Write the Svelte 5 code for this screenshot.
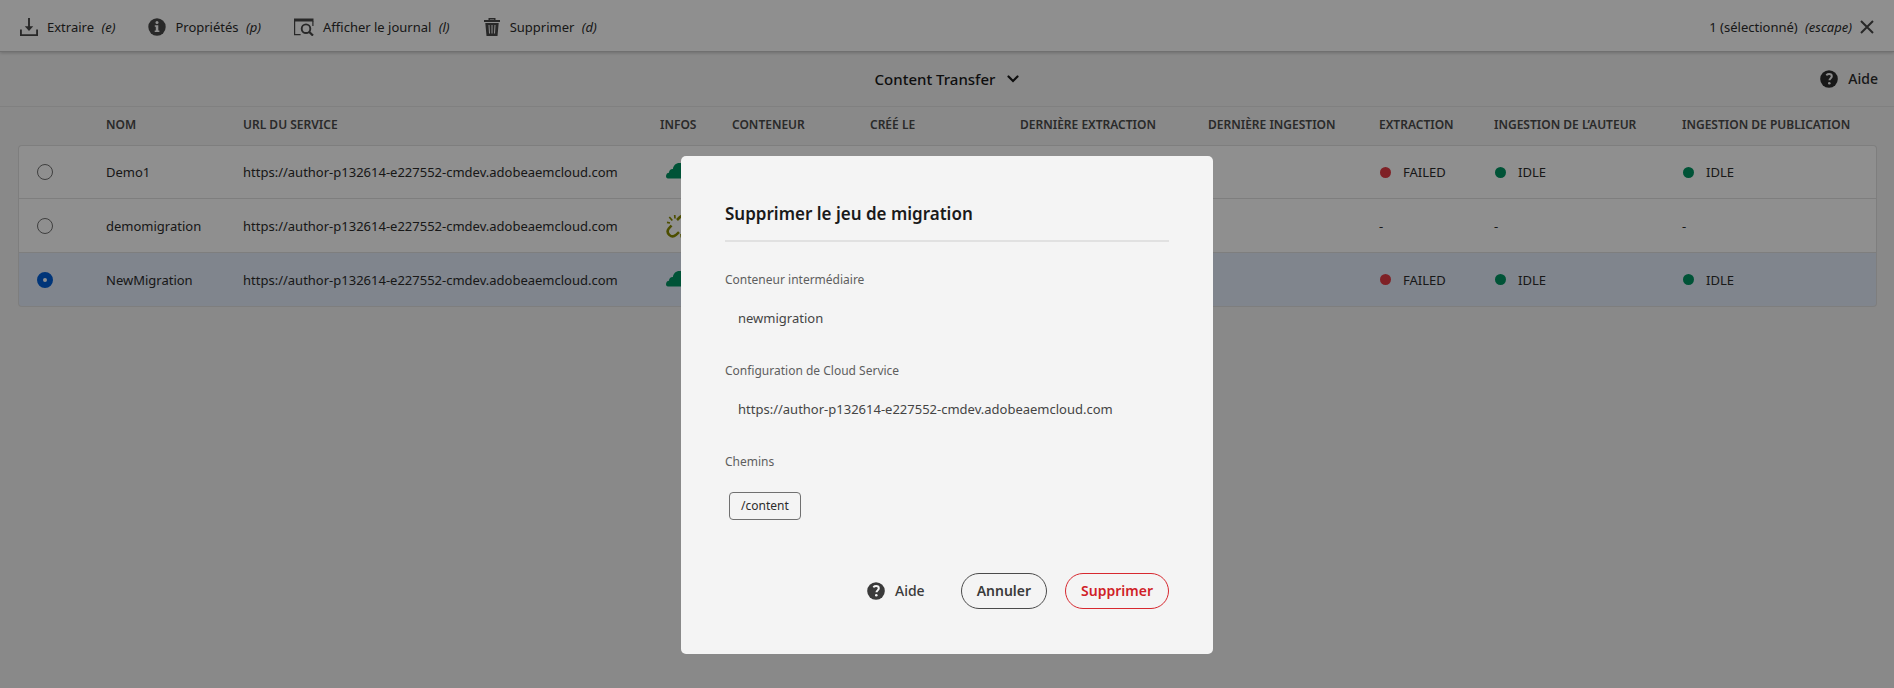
<script>
  const columns = [
    { title: '', width: 88 },
    { title: 'NOM', width: 137 },
    { title: 'URL DU SERVICE', width: 417 },
    { title: 'INFOS', width: 72 },
    { title: 'CONTENEUR', width: 138 },
    { title: 'CRÉÉ LE', width: 150 },
    { title: 'DERNIÈRE EXTRACTION', width: 188 },
    { title: 'DERNIÈRE INGESTION', width: 171 },
    { title: 'EXTRACTION', width: 115 },
    { title: 'INGESTION DE L’AUTEUR', width: 188 },
    { title: 'INGESTION DE PUBLICATION', width: 195 }
  ];

  const url = 'https://author-p132614-e227552-cmdev.adobeaemcloud.com';
  const rows = [
    { name: 'Demo1', icon: 'cloud', states: ['FAILED', 'IDLE', 'IDLE'] },
    { name: 'demomigration', icon: 'unlink', states: ['-', '-', '-'] },
    { name: 'NewMigration', icon: 'cloud', states: ['FAILED', 'IDLE', 'IDLE'] }
  ];
  let selected = $state('NewMigration');
</script>

{#snippet help()}
  <svg class="icon" viewBox="0 0 18 18" aria-hidden="true">
    <circle cx="9" cy="9" r="8.8" fill="currentColor" />
    <path class="cut" d="M6.3 5.2C7.2 4.4 8 4.100 9.100 4.100c1.700 0 2.700.9 2.700 2.200 0 1.900-2.300 2.200-2.300 4" />
    <circle class="hole" cx="9.300" cy="13.200" r="1.300" />
  </svg>
{/snippet}

<div class="page">
  <header class="actions">
    <div class="group">
      <button>
        <svg class="icon" viewBox="0 0 18 18" aria-hidden="true">
          <path d="M.9 11.500v5.600h16.200v-5.600M9 0v9" fill="none" stroke="currentColor" stroke-width="1.900" />
          <path d="M4.800 8.200h8.400L9 13z" fill="currentColor" />
        </svg>
        <span>Extraire <i>(e)</i></span>
      </button>
      <button>
        <svg class="icon" viewBox="0 0 18 18" aria-hidden="true">
          <circle cx="9" cy="9" r="8.700" fill="currentColor" />
          <circle class="hole" cx="9" cy="4.400" r="1.500" />
          <path class="hole" d="M6.800 7.200h3.500v5.300h1.100v1.600H6.700v-1.600h1.100V8.800h-1z" />
        </svg>
        <span>Propriétés <i>(p)</i></span>
      </button>
      <button>
        <svg class="icon wide" viewBox="0 0 20 18" aria-hidden="true">
          <path d="M0 .5h19.500v3H0z" fill="currentColor" />
          <path d="M.6 3v13.700h6M18.900 3v5" fill="none" stroke="currentColor" stroke-width="1.200" />
          <circle cx="12" cy="10.700" r="4.300" fill="none" stroke="currentColor" stroke-width="1.900" />
          <path d="M15 13.800l4 3.800" stroke="currentColor" stroke-width="2.200" />
        </svg>
        <span>Afficher le journal <i>(l)</i></span>
      </button>
      <button>
        <svg class="icon" viewBox="0 0 18 18" aria-hidden="true">
          <path d="M6.200 2V.7h5.600V2" fill="none" stroke="currentColor" stroke-width="1.400" />
          <path d="M1 2h16v2H1zM2.300 5h13.400l-1.200 13H3.500z" fill="currentColor" />
          <path class="slot" d="M6 7l.5 8.500M9 7v8.500M12 7l-.5 8.500" />
        </svg>
        <span>Supprimer <i>(d)</i></span>
      </button>
    </div>
    <button class="deselect">
      <span>1 (sélectionné) <i>(escape)</i></span>
      <svg class="cross" viewBox="0 0 14 14" aria-hidden="true">
        <path d="M1 1l12 12M13 1L1 13" stroke="currentColor" stroke-width="2" />
      </svg>
    </button>
  </header>

  <nav class="titlebar">
    <button class="title">
      Content Transfer
      <svg class="chevron" viewBox="0 0 12 8" aria-hidden="true">
        <path d="M1.500 1.500L6 6l4.500-4.500" fill="none" stroke="currentColor" stroke-width="2.200" stroke-linecap="round" />
      </svg>
    </button>
    <button class="help">{@render help()}Aide</button>
  </nav>

  <main>
    <table>
      <colgroup>
        {#each columns as column}
          <col style:width="{column.width}px" />
        {/each}
      </colgroup>
      <thead>
        <tr>
          {#each columns as column}
            <th scope="col">{column.title}</th>
          {/each}
        </tr>
      </thead>
      <tbody>
        {#each rows as row}
          <tr class:selected={selected === row.name}>
            <td class="pick">
              <input type="radio" id={row.name} name="migration" value={row.name} bind:group={selected} />
            </td>
            <td><label for={row.name}>{row.name}</label></td>
            <td>{url}</td>
            <td class="infos">
              {#if row.icon === 'cloud'}
                <svg viewBox="0 0 24 24" aria-hidden="true">
                  <path d="M2 18.500C.6 18.500 0 17.500 0 16.300c0-2 1.200-3.300 3-3.500 0-2.500 1.600-4 3.900-3.900C7.500 5.300 10 3 13.300 3c3.600 0 6.200 2.600 6.300 6.200 2.600.2 4.400 2.100 4.400 4.700 0 2.700-1.900 4.600-4.500 4.600z" fill="#009562" />
                </svg>
              {:else}
                <svg viewBox="0 0 24 24" aria-hidden="true">
                  <g fill="none" stroke="#8a8c00" stroke-width="2.600">
                    <path d="M5.500 11.500l-2.700 3c-3.400 4.200 2.400 10.400 7 6.600l3.200-3M11 6l3-3c4.400-3.700 10.200 2 6.700 6.700l-3 3" />
                    <path d="M1 8.300l3 .7M3.300 3l3 3.500M8.700 1L9 4.500M23 16.500l-3-.7M20.700 21.500l-3-3.500M15.300 23.500L15 20" stroke-width="1.700" />
                  </g>
                </svg>
              {/if}
            </td>
            <td></td>
            <td></td>
            <td></td>
            <td></td>
            {#each row.states as state}
              <td>
                {#if state === '-'}-{:else}<span class="state" class:failed={state === 'FAILED'}>{state}</span>{/if}
              </td>
            {/each}
          </tr>
        {/each}
      </tbody>
    </table>
  </main>
</div>

<div class="backdrop">
  <div class="dialog" role="dialog" aria-modal="true" aria-labelledby="dialog-title">
    <h2 id="dialog-title">Supprimer le jeu de migration</h2>
    <div class="field">
      <label for="container">Conteneur intermédiaire</label>
      <input id="container" type="text" readonly value="newmigration" />
    </div>
    <div class="field">
      <label for="service">Configuration de Cloud Service</label>
      <input id="service" type="text" readonly value={url} />
    </div>
    <div class="field">
      <span class="caption">Chemins</span>
      <span class="tag">/content</span>
    </div>
    <footer>
      <button class="help">{@render help()}Aide</button>
      <button class="pill">Annuler</button>
      <button class="pill warning">Supprimer</button>
    </footer>
  </div>
</div>

<style>
  :global(body) {
    background: #f4f4f4;
  }
  .page,
  .backdrop {
    font-family: 'Noto Sans', 'Open Sans', sans-serif;
    font-size: 13px;
    line-height: 20px;
    color: #2c2c2c;
  }
  .page {
    --hole: #fff;
    min-height: 100vh;
    background: #f4f4f4;
  }
  button {
    display: flex;
    align-items: center;
    padding: 0;
    border: 0;
    background: none;
    font: inherit;
    color: inherit;
    white-space: nowrap;
    cursor: pointer;
  }
  .icon {
    flex: none;
    width: 18px;
    height: 18px;
  }
  .icon.wide {
    width: 20px;
  }
  .hole {
    fill: var(--hole);
  }
  .cut {
    fill: none;
    stroke: var(--hole);
    stroke-width: 2;
  }
  .slot {
    fill: none;
    stroke: var(--hole);
    stroke-width: 1;
  }
  .actions {
    position: relative;
    display: flex;
    justify-content: space-between;
    box-sizing: border-box;
    height: 52px;
    padding: 2px 20px 0;
    background: #fff;
    border-bottom: 1px solid #c8c8c8;
    box-shadow: 0 1px 3px rgb(0 0 0 / 20%);
  }
  .actions svg {
    color: #484848;
  }
  .group {
    display: flex;
    gap: 33px;
  }
  .group button {
    gap: 9px;
  }
  .actions i {
    margin-left: 4px;
  }
  .deselect {
    gap: 8px;
  }
  .cross {
    width: 14px;
    height: 14px;
  }
  .titlebar {
    display: grid;
    grid-template-columns: 1fr auto 1fr;
    align-items: center;
    box-sizing: border-box;
    height: 55px;
    padding: 0 16px;
    border-bottom: 1px solid #e4e4e4;
    --hole: #f4f4f4;
  }
  .title {
    grid-column: 2;
    gap: 12px;
    font-size: 15px;
    font-weight: 500;
    color: #1a1a1a;
  }
  .chevron {
    width: 12px;
    height: 8px;
  }
  .help {
    gap: 10px;
    font-size: 14px;
    font-weight: 500;
  }
  .titlebar .help {
    justify-self: end;
  }
  main {
    padding: 0 17px 0 18px;
  }
  table {
    width: 100%;
    table-layout: fixed;
    border-spacing: 0;
  }
  th {
    height: 36px;
    padding: 0 0 2px;
    font-size: 12px;
    font-weight: 600;
    text-align: left;
    white-space: nowrap;
    color: #4b4b4b;
  }
  td {
    box-sizing: border-box;
    height: 54px;
    padding: 0;
    background: #fff;
    border-bottom: 1px solid #e0e0e0;
    white-space: nowrap;
  }
  tbody tr:first-child td {
    border-top: 1px solid #e0e0e0;
  }
  tbody td:first-child {
    border-left: 1px solid #e0e0e0;
  }
  tbody td:last-child {
    border-right: 1px solid #e0e0e0;
  }
  tbody tr:first-child td:first-child {
    border-top-left-radius: 4px;
  }
  tbody tr:first-child td:last-child {
    border-top-right-radius: 4px;
  }
  tbody tr:last-child td:first-child {
    border-bottom-left-radius: 4px;
  }
  tbody tr:last-child td:last-child {
    border-bottom-right-radius: 4px;
  }
  .selected td {
    background: #e4edfc;
  }
  td.pick {
    padding-left: 18px;
  }
  input[type='radio'] {
    display: block;
    appearance: none;
    box-sizing: border-box;
    width: 16px;
    height: 16px;
    margin: 0;
    border: 1px solid #707070;
    border-radius: 50%;
  }
  input[type='radio']:checked {
    border: 6px solid #005fd8;
    background: #fff;
  }
  td.infos {
    padding-left: 6px;
  }
  .infos svg {
    display: block;
    width: 24px;
    height: 24px;
  }
  .state {
    display: flex;
    align-items: center;
    gap: 12px;
  }
  .state::before {
    content: '';
    width: 11px;
    height: 11px;
    margin-left: 1px;
    border-radius: 50%;
    background: #009562;
  }
  .state.failed::before {
    background: #e33b44;
  }
  .backdrop {
    position: fixed;
    inset: 0;
    display: flex;
    justify-content: center;
    align-items: flex-start;
    padding-top: 156px;
    background: rgb(0 0 0 / 44%);
  }
  .dialog {
    --hole: #f4f4f4;
    box-sizing: border-box;
    width: 532px;
    padding: 43px 44px 45px;
    border-radius: 5px;
    background: #f4f4f4;
  }
  h2 {
    margin: 0 0 28px;
    padding-bottom: 11px;
    border-bottom: 2px solid #e1e1e1;
    font-size: 17px;
    font-weight: 600;
    line-height: 30px;
    color: #1a1a1a;
  }
  .field {
    display: flex;
    flex-direction: column;
    align-items: flex-start;
    margin-bottom: 33px;
  }
  .field label,
  .caption {
    font-size: 12px;
    line-height: 20px;
    color: #5e5e5e;
  }
  .field input {
    box-sizing: border-box;
    width: 100%;
    height: 20px;
    margin-top: 18px;
    padding: 0 13px;
    border: 0;
    outline: 0;
    background: none;
    font: inherit;
    color: #444;
  }
  .tag {
    margin: 20px 0 0 4px;
    padding: 3px 11px;
    border: 1px solid #707070;
    border-radius: 4px;
    font-size: 12px;
  }
  footer {
    display: flex;
    justify-content: flex-end;
    align-items: center;
    gap: 18px;
    margin-top: 53px;
    color: #3a3a3a;
  }
  footer .help {
    margin-right: 18px;
  }
  .pill {
    height: 36px;
    padding: 0 15px;
    border: 1px solid #4b4b4b;
    border-radius: 18px;
    font-size: 14px;
    font-weight: 600;
  }
  .warning {
    border-color: #d7282f;
    color: #d01f28;
  }
</style>
